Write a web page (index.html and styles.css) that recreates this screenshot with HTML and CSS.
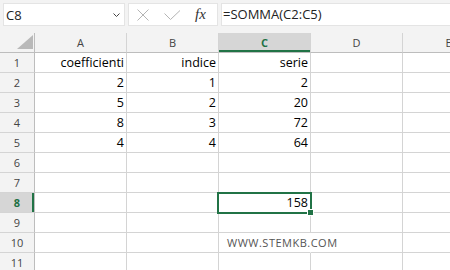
FILE: index.html
```html
<!DOCTYPE html>
<html lang="it">
<head>
    <meta charset="UTF-8">
    <meta name="viewport" content="width=device-width, initial-scale=1.0">
    <title>SOMMA serie</title>
    <link rel="stylesheet" href="styles.css">
</head>
<body>
    <div class="toolbar">
        <div class="namebox">
            <span>C8</span>
            <svg class="chevron" width="7" height="4" viewBox="0 0 7 4"><polyline points="0.5,0.5 3.5,3.5 6.5,0.5" fill="none" stroke="#444" stroke-width="1"/></svg>
        </div>
        <div class="fxbox">
            <svg class="icon-x" width="12" height="12" viewBox="0 0 12 12"><path d="M0.5 0.5 L11.5 11.5 M11.5 0.5 L0.5 11.5" stroke="#b4b4b4" stroke-width="1"/></svg>
            <svg class="icon-ok" width="17" height="10" viewBox="0 0 17 10"><polyline points="0.5,3.5 6.5,9.5 16,0.5" fill="none" stroke="#b4b4b4" stroke-width="1"/></svg>
            <span class="fx">fx</span>
        </div>
        <div class="formula">=SOMMA(C2:C5)</div>
    </div>

    <div class="sheet">
        <div class="hd corner"><svg width="34" height="19" viewBox="0 0 34 19"><polygon points="17,16 33,16 33,2" fill="#b9b9b9"/></svg></div>
        <div class="hd col">A</div>
        <div class="hd col">B</div>
        <div class="hd col active">C</div>
        <div class="hd col">D</div>
        <div class="hd col">E</div>

        <div class="hd row">1</div>
        <div class="cell">coefficienti</div>
        <div class="cell">indice</div>
        <div class="cell">serie</div>
        <div class="cell"></div>
        <div class="cell"></div>

        <div class="hd row">2</div>
        <div class="cell">2</div>
        <div class="cell">1</div>
        <div class="cell">2</div>
        <div class="cell"></div>
        <div class="cell"></div>

        <div class="hd row">3</div>
        <div class="cell">5</div>
        <div class="cell">2</div>
        <div class="cell">20</div>
        <div class="cell"></div>
        <div class="cell"></div>

        <div class="hd row">4</div>
        <div class="cell">8</div>
        <div class="cell">3</div>
        <div class="cell">72</div>
        <div class="cell"></div>
        <div class="cell"></div>

        <div class="hd row">5</div>
        <div class="cell">4</div>
        <div class="cell">4</div>
        <div class="cell">64</div>
        <div class="cell"></div>
        <div class="cell"></div>

        <div class="hd row">6</div>
        <div class="cell"></div>
        <div class="cell"></div>
        <div class="cell"></div>
        <div class="cell"></div>
        <div class="cell"></div>

        <div class="hd row">7</div>
        <div class="cell"></div>
        <div class="cell"></div>
        <div class="cell"></div>
        <div class="cell"></div>
        <div class="cell"></div>

        <div class="hd row active">8</div>
        <div class="cell"></div>
        <div class="cell"></div>
        <div class="cell selected">158<span class="handle"></span></div>
        <div class="cell"></div>
        <div class="cell"></div>

        <div class="hd row">9</div>
        <div class="cell"></div>
        <div class="cell"></div>
        <div class="cell"></div>
        <div class="cell"></div>
        <div class="cell"></div>

        <div class="hd row">10</div>
        <div class="cell"></div>
        <div class="cell"></div>
        <div class="cell overflow"><span class="watermark">WWW.STEMKB.COM</span></div>
        <div class="cell"></div>
        <div class="cell"></div>

        <div class="hd row">11</div>
        <div class="cell"></div>
        <div class="cell"></div>
        <div class="cell"></div>
        <div class="cell"></div>
        <div class="cell"></div>
    </div>
</body>
</html>
```

FILE: styles.css
```css
body {
    margin: 0;
    overflow: hidden;
    background: #fff;
    font-family: 'Open Sans', 'Noto Sans', sans-serif;
    color: #000;
}
.toolbar {
    display: flex;
    height: 33px;
    box-sizing: border-box;
    padding: 3px 0 0 3px;
    background: #f3f3f3;
}
.namebox {
    width: 122px;
    height: 23px;
    box-sizing: border-box;
    background: #fff;
    border: 1px solid #e4e4e4;
    display: flex;
    align-items: center;
    justify-content: space-between;
    padding: 0 4px 0 2px;
    font-size: 13px;
    color: #222;
}
.chevron {
    margin-top: 1px;
}
.fxbox {
    width: 90px;
    height: 23px;
    box-sizing: border-box;
    margin-left: 3px;
    background: #fff;
    border: 1px solid #e4e4e4;
    display: flex;
    align-items: center;
    padding-left: 8px;
}
.icon-ok {
    margin-left: 15px;
    margin-top: 1px;
}
.fx {
    margin-left: 14px;
    font-family: 'Liberation Serif', serif;
    font-style: italic;
    font-size: 15px;
    color: #333;
}
.formula {
    flex: 1;
    height: 23px;
    box-sizing: border-box;
    margin-left: 3px;
    background: #fff;
    border: 1px solid #e4e4e4;
    border-right: none;
    padding-left: 1px;
    font-size: 13px;
    line-height: 20px;
    color: #222;
}
.sheet {
    display: grid;
    grid-template-columns: 35px repeat(5, 92px);
    grid-auto-rows: 20px;
}
.sheet > div {
    box-sizing: border-box;
    border-right: 1px solid #d4d4d4;
    border-bottom: 1px solid #d4d4d4;
    line-height: 19px;
    white-space: nowrap;
}
.hd {
    background: #f3f3f3;
    color: #444;
    font-size: 11px;
    text-align: center;
}
.hd.col {
    border-bottom-color: #bdbdbd;
}
.hd.row {
    border-right-color: #bdbdbd;
}
.hd.corner {
    border-bottom-color: #bdbdbd;
    border-right-color: #bdbdbd;
    line-height: 0;
}
.hd.active {
    background: #d6d6d6;
    color: #1e7145;
    font-weight: bold;
}
.hd.col.active {
    box-shadow: inset 0 -2px 0 #217346;
}
.hd.row.active {
    box-shadow: inset -2px 0 0 #217346;
}
.cell {
    font-size: 12.5px;
    text-align: right;
    padding-right: 2px;
}
.selected {
    position: relative;
}
.selected::after {
    content: '';
    position: absolute;
    left: -2px;
    right: -2px;
    top: -1px;
    bottom: -2px;
    border: 2px solid #217346;
}
.handle {
    position: absolute;
    right: -4px;
    bottom: -4px;
    width: 5px;
    height: 5px;
    background: #217346;
    border: 1px solid #fff;
    z-index: 1;
}
.sheet > .overflow {
    text-align: left;
    overflow: visible;
    border-right-color: #fff;
    padding-left: 8px;
}
.watermark {
    font-size: 11px;
    letter-spacing: 0.5px;
    color: #555;
}
```
